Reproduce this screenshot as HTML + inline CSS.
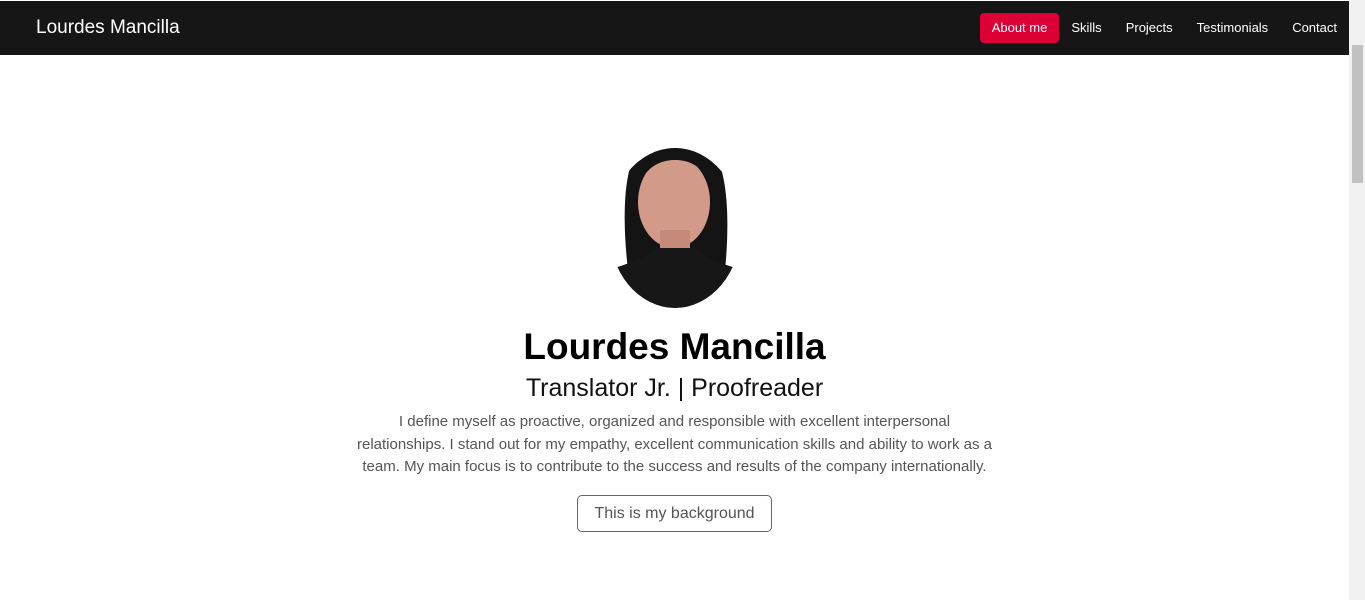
<!DOCTYPE html>
<html><head><meta charset="utf-8"><style>
*{margin:0;padding:0;box-sizing:border-box}
body{width:1365px;height:600px;overflow:hidden;background:#fff;font-family:"Liberation Sans",sans-serif;position:relative}
.nav{position:absolute;left:0;top:1px;width:1349px;height:54px;background:#161616}
.brand{position:absolute;left:36px;top:16px;color:#fff;font-size:19px}
.links{position:absolute;right:0;top:12px;display:flex;font-size:13px;color:#fff}
.links span{padding:0 12px;line-height:30px}
.links .act{background:#dc0036;border-radius:4px;padding:0 12px}
.sb{position:absolute;right:0;top:0;width:16px;height:600px;background:#f1f1f1}
.sb i{position:absolute;left:3px;top:45px;width:11px;height:138px;background:#c1c1c1}
h1{position:absolute;top:326px;width:1349px;text-align:center;font-size:37px;font-weight:bold;color:#000}
h2{position:absolute;top:374px;width:1349px;text-align:center;font-size:25px;font-weight:normal;color:#111}
p{position:absolute;left:300px;top:411px;width:749px;text-align:center;font-size:15px;line-height:22.5px;color:#555;white-space:nowrap}
.btn{position:absolute;left:577px;top:495px;width:195px;height:37px;border:1px solid #666;border-radius:5px;text-align:center;line-height:35px;font-size:16px;color:#555}
</style></head><body>
<div class="nav"><div class="brand">Lourdes Mancilla</div>
<div class="links"><span class="act">About me</span><span>Skills</span><span>Projects</span><span>Testimonials</span><span>Contact</span></div></div>
<div class="sb"><i></i></div>
<svg style="position:absolute;left:590px;top:130px" width="170" height="190">
<defs><clipPath id="c"><ellipse cx="85" cy="98" rx="66" ry="80"/></clipPath></defs>
<g clip-path="url(#c)">
<path d="M38 140 C32 90 33 35 50 18 C65 5 105 5 120 18 C138 35 140 90 135 140 Z" fill="#141414"/>
<ellipse cx="84" cy="72" rx="36" ry="46" fill="#d29a88"/>
<path d="M48 55 C50 28 70 18 85 18 C100 18 118 28 122 55 C112 35 98 30 85 30 C72 30 58 35 48 55Z" fill="#141414"/>
<rect x="70" y="100" width="30" height="22" fill="#c58a78"/>
<path d="M10 180 L10 142 C40 134 60 126 65 118 L105 118 C110 126 130 134 160 142 L160 190Z" fill="#171717"/>
</g></svg>
<h1>Lourdes Mancilla</h1>
<h2>Translator Jr. | Proofreader</h2>
<p>I define myself as proactive, organized and responsible with excellent interpersonal<br>relationships. I stand out for my empathy, excellent communication skills and ability to work as a<br>team. My main focus is to contribute to the success and results of the company internationally.</p>
<div class="btn">This is my background</div>
</body></html>
